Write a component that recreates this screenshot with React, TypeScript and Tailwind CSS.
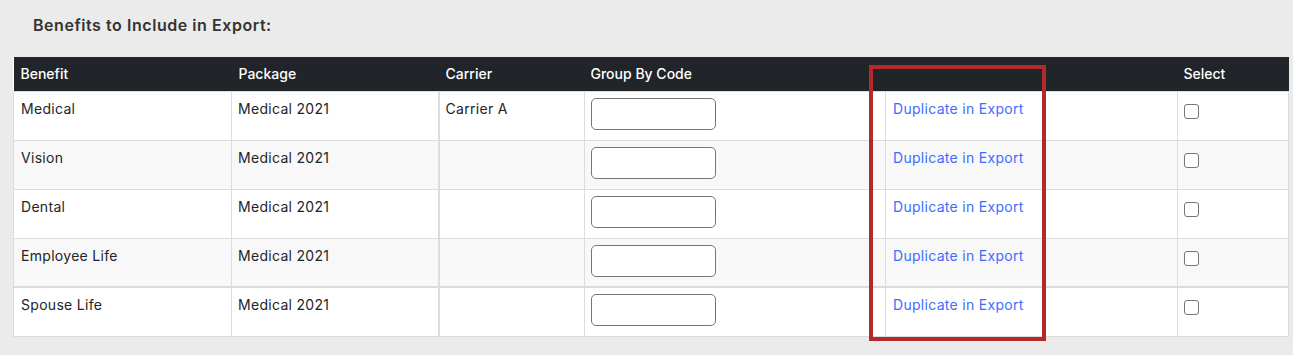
const rows = [
  { benefit: "Medical", pkg: "Medical 2021", carrier: "Carrier A" },
  { benefit: "Vision", pkg: "Medical 2021", carrier: "" },
  { benefit: "Dental", pkg: "Medical 2021", carrier: "" },
  { benefit: "Employee Life", pkg: "Medical 2021", carrier: "" },
  { benefit: "Spouse Life", pkg: "Medical 2021", carrier: "" },
];

export default function App() {
  return (
    <div className="relative h-[355px] w-[1293px] bg-[#ebebeb] font-['Inter',sans-serif] text-[#212529]">
      <h3 className="px-[33px] pt-[15px] text-[16px] font-semibold leading-5 tracking-[0.55px] text-[#333]">
        Benefits to Include in Export:
      </h3>

      <div className="px-[13px] pt-[22px]">
        <table className="w-[1275px] table-fixed border-collapse bg-white text-[14px] leading-5 tracking-[0.3px]">
          <colgroup>
            <col className="w-[218px]" />
            <col className="w-[207px]" />
            <col className="w-[146px]" />
            <col className="w-[301px]" />
            <col className="w-[292px]" />
            <col className="w-[111px]" />
          </colgroup>
          <thead>
            <tr className="h-[34px] bg-[#212529] text-left tracking-normal text-white">
              <th className="px-[7px] font-medium">Benefit</th>
              <th className="px-[7px] font-medium">Package</th>
              <th className="px-[7px] font-medium">Carrier</th>
              <th className="px-[6px] font-medium">Group By Code</th>
              <th className="px-2 font-medium"></th>
              <th className="px-[6px] font-medium">Select</th>
            </tr>
          </thead>
          <tbody>
            {rows.map((row, i) => (
              <tr
                key={row.benefit}
                className={`h-[49px] border border-[#dcdcdc] ${i % 2 === 1 ? "bg-[#f8f8f8]" : "bg-white"} ${i === 4 ? "border-t-2" : ""}`}
              >
                <td className="border border-[#dcdcdc] px-[7px] pt-[7px] align-top">{row.benefit}</td>
                <td className="border border-[#dcdcdc] px-[6px] pt-[7px] align-top">{row.pkg}</td>
                <td className="border border-[#dcdcdc] border-l-2 px-[6px] pt-[7px] align-top">{row.carrier}</td>
                <td className="border border-[#dcdcdc] px-[6px] pt-[6px] align-top">
                  <input
                    type="text"
                    className="block h-[32px] w-[125px] rounded-[5px] border border-[#767676] bg-white"
                  />
                </td>
                <td className="border border-[#dcdcdc] px-[7px] pt-[7px] align-top">
                  <a href="#" className="text-[#3e6cff]">
                    Duplicate in Export
                  </a>
                </td>
                <td className="border border-[#dcdcdc] px-[6px] pt-[12px] align-top">
                  <span className="block h-[15px] w-[15px] rounded-[3px] border border-[#767676] bg-white" />
                </td>
              </tr>
            ))}
          </tbody>
        </table>
      </div>

      {/* highlight box drawn over the duplicate column */}
      <div className="pointer-events-none absolute left-[869px] top-[65px] h-[276px] w-[177px] border-[4px] border-[#b22a2a]" />
    </div>
  );
}
